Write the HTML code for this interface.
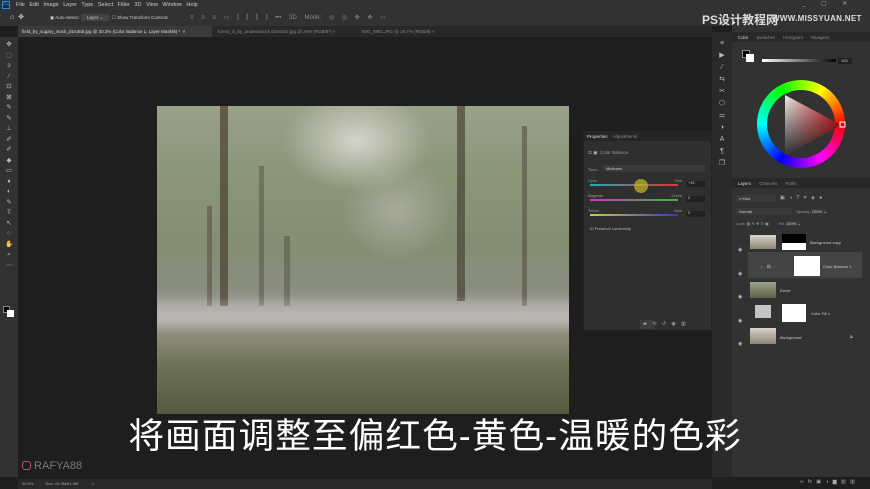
<!DOCTYPE html>
<html><head><meta charset="utf-8"><style>
*{margin:0;padding:0;box-sizing:border-box}
body{width:870px;height:489px;background:#1e1e1f;font-family:"Liberation Sans",sans-serif;color:#bbb;position:relative;overflow:hidden;font-size:5px}
.a{position:absolute}
</style></head><body>
<!-- menu -->
<div class="a" style="left:0;top:0;width:870px;height:10px;background:#323232"></div>
<div class="a" style="left:2px;top:1px;width:8px;height:8px;background:#0a2d4d;border:1px solid #2d8ad8;color:#2d8ad8;font-size:5px;line-height:6px;text-align:center">Ps</div>
<div class="a" style="left:16px;top:2px;font-size:5.5px;color:#ccc;word-spacing:3px">File Edit Image Layer Type Select Filter 3D View Window Help</div>
<div class="a" style="left:802px;top:0;color:#aaa;font-size:6px;word-spacing:14px">_ ▢ ✕</div>
<!-- options -->
<div class="a" style="left:0;top:10px;width:732px;height:16px;background:#323232"></div>
<div class="a" style="left:10px;top:13px;color:#ccc;font-size:7px">⌂ &nbsp;✥</div>
<div class="a" style="left:50px;top:15px;color:#ccc;font-size:4.5px">▣ Auto-Select: <span style="background:#444;padding:1px 6px">Layer ⌄</span> &nbsp;☐ Show Transform Controls</div>
<div class="a" style="left:190px;top:14px;color:#888;font-size:6px;word-spacing:6px">≡ ≡ ≡ ▭ ⫿ ⫿ ⫿ ⫿ ••• 3D Mode: ◎ ◎ ✥ ✥ ▭</div>
<div class="a" style="left:732px;top:10px;width:138px;height:22px;background:#323232"></div>
<div class="a" style="left:702px;top:11px;font-family:'Liberation Sans','Noto Sans CJK SC',sans-serif;font-size:12px;color:#ddd;font-weight:bold">PS设计教程网</div>
<div class="a" style="left:772px;top:14px;font-size:8px;color:#ddd;font-weight:bold;letter-spacing:0.3px">WWW.MISSYUAN.NET</div>
<!-- tabs -->
<div class="a" style="left:18px;top:26px;width:694px;height:11px;background:#282828"></div>
<div class="a" style="left:18px;top:26px;width:194px;height:11px;background:#3a3a3a;color:#ddd;font-size:4.5px;padding:3px 4px">field_by_sugary_stock_d1ro5dr.jpg @ 30.3% (Color Balance 1, Layer Mask/8) * &nbsp;×</div>
<div class="a" style="left:218px;top:29px;color:#888;font-size:4.5px">forest_iii_by_andeeastock d1e14a7.jpg @ 25% (RGB/8*) ×</div>
<div class="a" style="left:362px;top:29px;color:#888;font-size:4.5px">IMG_9951.JPG @ 16.7% (RGB/8) ×</div>
<!-- left toolbar -->
<div class="a" style="left:0;top:37px;width:18px;height:440px;background:#323232"></div>
<div class="a" style="left:4px;top:40px;width:10px;color:#bbb;font-size:6.5px;line-height:10.5px;text-align:center">✥<br>⬚<br>ↄ<br>⁄<br>⊡<br>⊠<br>✎<br>✎<br>⊥<br>✐<br>✐<br>◆<br>▭<br>♦<br>◐<br>✎<br>T<br>↖<br>○<br>✋<br>⌕<br>⋯</div>
<div class="a" style="left:3px;top:306px;width:7px;height:7px;background:#000;border:1px solid #888"></div>
<div class="a" style="left:7px;top:310px;width:7px;height:7px;background:#fff"></div>
<!-- image -->
<div class="a" style="left:157px;top:106px;width:412px;height:308px;background:linear-gradient(180deg,#9aa28a 0%,#8c977a 20%,#848e72 45%,#8a8e80 60%,#a9a7a3 66%,#b7b4b1 69%,#8f8e7c 74%,#6f7258 84%,#575a40 100%);overflow:hidden">
<div class="a" style="left:120px;top:-20px;width:160px;height:110px;background:radial-gradient(ellipse,rgba(225,222,215,.85),transparent 65%)"></div>
<div class="a" style="left:180px;top:50px;width:120px;height:110px;background:radial-gradient(ellipse,rgba(190,188,180,.6),transparent 65%)"></div>
<div class="a" style="left:63px;top:0;width:8px;height:200px;background:#4f4636;opacity:.75"></div>
<div class="a" style="left:50px;top:100px;width:5px;height:100px;background:#4f4a3c;opacity:.5"></div>
<div class="a" style="left:102px;top:60px;width:5px;height:140px;background:#4f4a3c;opacity:.45"></div>
<div class="a" style="left:127px;top:130px;width:6px;height:70px;background:#4f4a3c;opacity:.45"></div>
<div class="a" style="left:300px;top:0;width:8px;height:195px;background:#4a4436;opacity:.7"></div>
<div class="a" style="left:365px;top:20px;width:5px;height:180px;background:#4f4a3c;opacity:.55"></div>
<div class="a" style="left:0;top:190px;width:100%;height:35px;background:linear-gradient(180deg,transparent,rgba(190,186,182,.6),transparent)"></div>
</div>
<!-- properties panel -->
<div class="a" style="left:583px;top:131px;width:129px;height:200px;background:#2f2f2f;border:1px solid #222"></div>
<div class="a" style="left:583px;top:131px;width:129px;height:10px;background:#262626"></div>
<div class="a" style="left:587px;top:134px;font-size:4.5px;color:#ddd">Properties &nbsp;&nbsp;&nbsp;<span style="color:#888">Adjustments</span></div>
<div class="a" style="left:588px;top:150px;font-size:4.5px;color:#bbb">⚖ ▣ &nbsp;<span style="color:#999">Color Balance</span></div>
<div class="a" style="left:588px;top:167px;font-size:4px;color:#999">Tone:</div>
<div class="a" style="left:603px;top:165px;width:102px;height:7px;background:#3a3a3a;font-size:4px;color:#ccc;padding:1px 3px">Midtones</div>
<div class="a" style="left:588px;top:179px;font-size:3.8px;color:#999;width:94px">Cyan<span style="float:right">Red</span></div>
<div class="a" style="left:590px;top:184px;width:88px;height:1.5px;background:linear-gradient(90deg,#2ab,#d33)"></div>
<div class="a" style="left:634px;top:179px;width:14px;height:14px;border-radius:50%;background:rgba(190,180,40,.75)"></div>
<div class="a" style="left:686px;top:181px;width:19px;height:6px;background:#222;font-size:3.8px;color:#ccc;padding-left:2px">+15</div>
<div class="a" style="left:588px;top:194px;font-size:3.8px;color:#999;width:94px">Magenta<span style="float:right">Green</span></div>
<div class="a" style="left:590px;top:199px;width:88px;height:1.5px;background:linear-gradient(90deg,#c3c,#3b3)"></div>
<div class="a" style="left:686px;top:196px;width:19px;height:6px;background:#222;font-size:3.8px;color:#ccc;padding-left:2px">0</div>
<div class="a" style="left:588px;top:209px;font-size:3.8px;color:#999;width:94px">Yellow<span style="float:right">Blue</span></div>
<div class="a" style="left:590px;top:214px;width:88px;height:1.5px;background:linear-gradient(90deg,#cc3,#33d)"></div>
<div class="a" style="left:686px;top:211px;width:19px;height:6px;background:#222;font-size:3.8px;color:#ccc;padding-left:2px">0</div>
<div class="a" style="left:590px;top:226px;font-size:4px;color:#bbb">☑ Preserve Luminosity</div>
<div class="a" style="left:640px;top:320px;width:14px;height:9px;background:#3c3c3c"></div>
<div class="a" style="left:643px;top:321px;font-size:5px;color:#aaa;word-spacing:4px">▰ ⟲ ↺ ◉ ▥</div>
<!-- icon column -->
<div class="a" style="left:712px;top:32px;width:20px;height:445px;background:#2a2a2a"></div>
<div class="a" style="left:717px;top:38px;width:10px;color:#bbb;font-size:7px;line-height:12px;text-align:center">≡<br>▶<br>⁄<br>⇆<br>✂<br>⬡<br>⚌<br>◑<br>A<br>¶<br>❐</div>
<!-- right panel -->
<div class="a" style="left:732px;top:32px;width:138px;height:445px;background:#323232"></div>
<div class="a" style="left:732px;top:32px;width:138px;height:10px;background:#282828"></div>
<div class="a" style="left:738px;top:35px;font-size:4.3px;color:#888;word-spacing:7px"><span style="color:#ddd">Color</span> Swatches Histogram Navigator</div>
<div class="a" style="left:742px;top:50px;width:8px;height:8px;background:#000;border:1px solid #888"></div>
<div class="a" style="left:746px;top:54px;width:8px;height:8px;background:#fff"></div>
<div class="a" style="left:762px;top:59px;width:74px;height:3px;background:linear-gradient(90deg,#fff,#000)"></div>
<div class="a" style="left:838px;top:58px;width:14px;height:6px;background:#222;font-size:4px;color:#ccc;padding-left:3px">100</div>
<div class="a" style="left:757px;top:80px;width:88px;height:88px;border-radius:50%;background:conic-gradient(from 90deg,#f00,#f0f,#00f,#0ff,#0f0,#ff0,#f00)"></div>
<div class="a" style="left:767px;top:90px;width:68px;height:68px;border-radius:50%;background:#323232"></div>
<svg class="a" style="left:757px;top:80px" width="90" height="90"><defs><linearGradient id="g" x1="0" x2="1"><stop offset="0" stop-color="#eee"/><stop offset="1" stop-color="#e11"/></linearGradient><linearGradient id="k" x1="0" y1="0" x2="0" y2="1"><stop offset="0" stop-color="rgba(0,0,0,0)"/><stop offset="1" stop-color="#000"/></linearGradient></defs><polygon points="28,15 84,45 28,75" fill="url(#g)"/><polygon points="28,15 84,45 28,75" fill="url(#k)" opacity=".8"/><rect x="83" y="42" width="5" height="5" fill="none" stroke="#fff"/></svg>
<div class="a" style="left:732px;top:178px;width:138px;height:10px;background:#282828"></div>
<div class="a" style="left:738px;top:181px;font-size:4.3px;color:#888;word-spacing:7px"><span style="color:#ddd">Layers</span> Channels Paths</div>
<div class="a" style="left:736px;top:195px;width:40px;height:7px;background:#3a3a3a;font-size:4px;color:#ccc;padding:1px 3px">⌕ Kind</div>
<div class="a" style="left:780px;top:195px;font-size:5px;color:#aaa;word-spacing:3px">▣ ◑ T ⌗ ◈ ●</div>
<div class="a" style="left:736px;top:208px;width:56px;height:7px;background:#3a3a3a;font-size:4px;color:#ccc;padding:1px 3px">Normal</div>
<div class="a" style="left:796px;top:209px;font-size:4px;color:#999">Opacity: <span style="background:#3a3a3a;color:#ccc">100% ⌄</span></div>
<div class="a" style="left:736px;top:221px;font-size:4px;color:#999">Lock: ▦ ✎ ✥ ⊡ ▣ &nbsp;&nbsp;&nbsp;&nbsp;&nbsp;&nbsp;&nbsp;&nbsp;Fill: <span style="background:#3a3a3a;color:#ccc">100% ⌄</span></div>
<div class="a" style="left:748px;top:252px;width:114px;height:26px;background:#444"></div>
<div class="a" style="left:738px;top:239px;font-size:5px;color:#bbb;line-height:23.5px">◉<br>◉<br>◉<br>◉<br>◉</div>
<div class="a" style="left:750px;top:235px;width:26px;height:14px;background:linear-gradient(#d8d4cc,#8d8675)"></div>
<div class="a" style="left:782px;top:234px;width:24px;height:16px;background:linear-gradient(#000 55%,#fff 55%)"></div>
<div class="a" style="left:810px;top:240px;font-size:4px;color:#ccc">Background copy</div>
<div class="a" style="left:760px;top:264px;font-size:5px;color:#ccc">⸝ &nbsp;&nbsp;⚖</div>
<div class="a" style="left:794px;top:256px;width:26px;height:20px;background:#fff"></div>
<div class="a" style="left:823px;top:264px;font-size:4px;color:#ccc">Color Balance 1</div>
<div class="a" style="left:750px;top:282px;width:26px;height:16px;background:linear-gradient(#9aa28a,#5d6148)"></div>
<div class="a" style="left:780px;top:288px;font-size:4px;color:#ccc">Event</div>
<div class="a" style="left:755px;top:305px;width:16px;height:13px;background:#c4c4c4"></div>
<div class="a" style="left:782px;top:304px;width:24px;height:18px;background:#fff"></div>
<div class="a" style="left:811px;top:311px;font-size:4px;color:#ccc">Color Fill 1</div>
<div class="a" style="left:750px;top:328px;width:26px;height:16px;background:linear-gradient(#d8d4cc,#8d8675)"></div>
<div class="a" style="left:780px;top:335px;font-size:4px;color:#ccc;font-style:italic">Background</div>
<div class="a" style="left:850px;top:334px;font-size:5px;color:#aaa">🔒︎</div>
<div class="a" style="left:800px;top:479px;font-size:5px;color:#aaa;word-spacing:3px">∞ fx ▣ ◑ ▆ ▥ ▥</div>
<!-- subtitle -->
<div class="a" style="left:0;top:416px;width:870px;text-align:center;font-family:'Liberation Sans','Noto Sans CJK SC',sans-serif;font-size:35px;color:#fff;letter-spacing:1px;line-height:42px;transform:scaleX(1.02)">将画面调整至偏红色-黄色-温暖的色彩</div>
<div class="a" style="left:22px;top:460px;font-size:11px;color:#777"><span style="display:inline-block;width:9px;height:9px;border:1.5px solid #b5557a;border-radius:3px;vertical-align:-1px"></span> RAFYA88</div>
<!-- status -->
<div class="a" style="left:18px;top:479px;width:694px;height:10px;background:#2a2a2a"></div>
<div class="a" style="left:22px;top:481px;font-size:4px;color:#aaa">30.3% &nbsp;&nbsp;&nbsp;&nbsp;&nbsp;&nbsp;&nbsp;&nbsp;&nbsp;&nbsp;Doc: 15.9M/61.9M &nbsp;&nbsp;&nbsp;&nbsp;&nbsp;&nbsp;&nbsp;&nbsp;&nbsp;&nbsp;&nbsp;&gt;</div>
</body></html>
